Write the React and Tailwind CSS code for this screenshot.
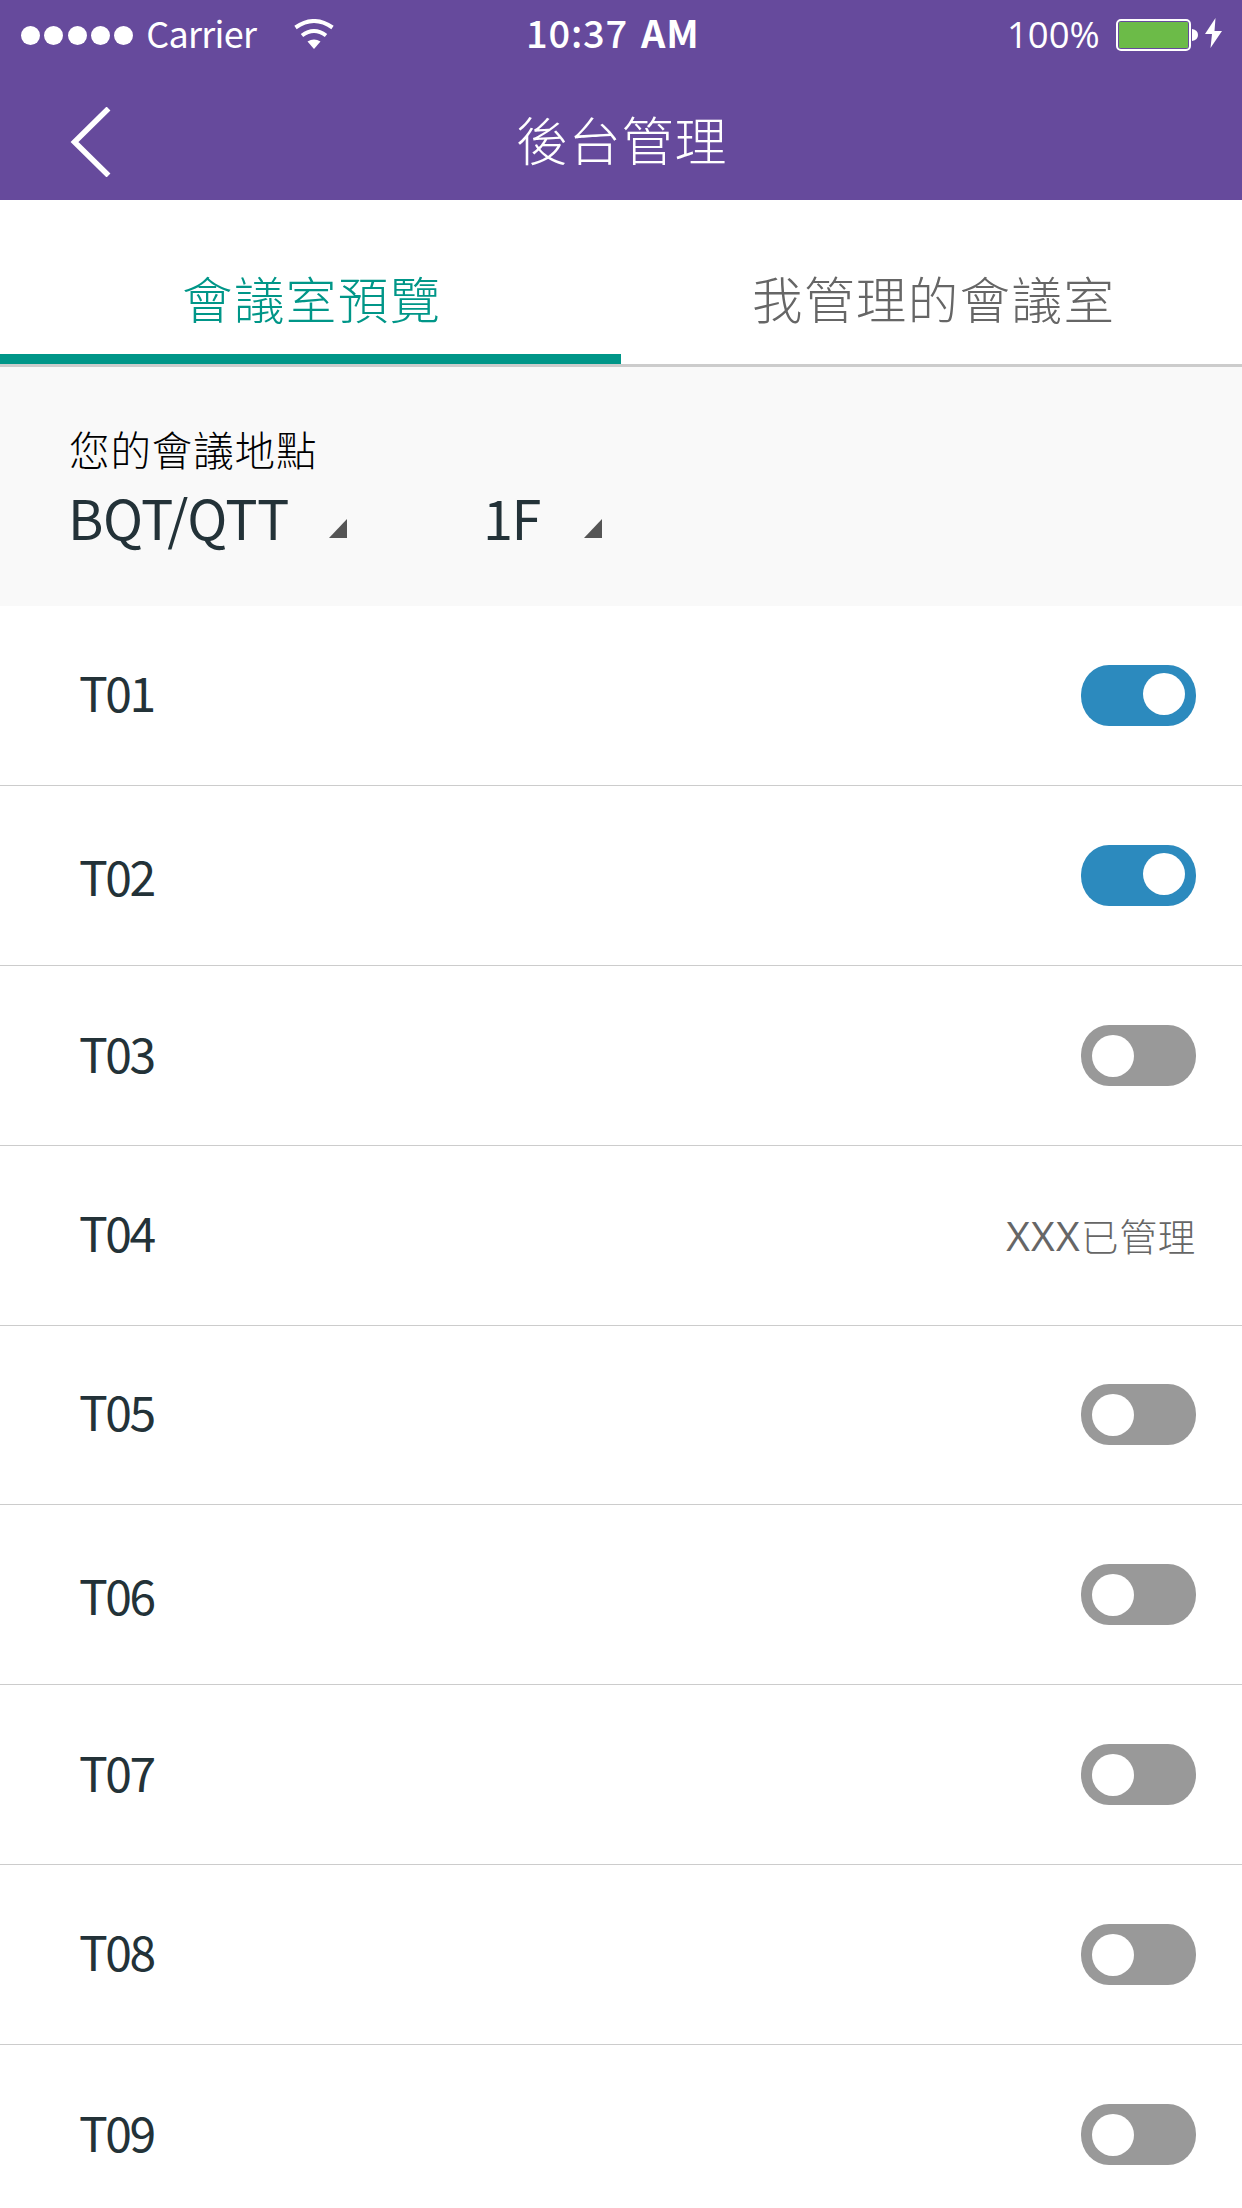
const rooms = [
  { name: "T01", on: true, row: "h-[180px]", label: "pt-[61px]", control: "pt-[59px]" },
  { name: "T02", on: true, row: "h-[180px]", label: "pt-[65px]", control: "pt-[59px]" },
  { name: "T03", on: false, row: "h-[180px]", label: "pt-[62px]", control: "pt-[59px]" },
  { name: "T04", owner: "XXX", row: "h-[180px]", label: "pt-[61px]", control: "pt-[59px]" },
  { name: "T05", on: false, row: "h-[179px]", label: "pt-[60px]", control: "pt-[58px]" },
  { name: "T06", on: false, row: "h-[180px]", label: "pt-[65px]", control: "pt-[59px]" },
  { name: "T07", on: false, row: "h-[180px]", label: "pt-[62px]", control: "pt-[59px]" },
  { name: "T08", on: false, row: "h-[180px]", label: "pt-[61px]", control: "pt-[59px]" },
  { name: "T09", on: false, row: "h-[180px]", label: "pt-[62px]", control: "pt-[59px]" },
];

function StatusBar() {
  return (
    <div className="flex h-[70px] items-center">
      <div className="ml-[21px] flex w-[505px] items-center">
        <div className="flex gap-[4.3px]">
          {[0, 1, 2, 3, 4].map((i) => (
            <span key={i} className="size-[19px] rounded-full bg-white" />
          ))}
        </div>
        <span className="mb-[6px] ml-[13px] w-[148px] text-[36px] leading-[50px] tracking-[-0.7px]">Carrier</span>
        <svg className="mb-[2px] h-[30px] w-[40px]" viewBox="0 0 40 30" fill="none" stroke="#fff" strokeWidth="4">
          <path d="M1.500 8.500Q20 -4.500 38.500 8.500" />
          <path d="M8 16.500Q20 7.500 32 16.500" />
          <path d="M13.500 22.500Q20 18.500 26.500 22.500L20 30Z" fill="#fff" stroke="none" />
        </svg>
      </div>
      <span className="mb-[6px] w-[481px] whitespace-nowrap text-[38px] font-bold leading-[50px] tracking-[0.8px]">
        <span className="font-medium">10:37</span>
        <span className="ml-[13px]">AM</span>
      </span>
      <span className="mb-[2px] w-[107px] font-['Open_Sans',sans-serif] text-[36.5px] leading-[50px]">100%</span>
      <svg className="h-[34px] w-[108px]" viewBox="1114 18 108 34" fill="none">
        <rect x="1117" y="20" width="73" height="30" rx="4" stroke="#fff" strokeWidth="2" />
        <rect x="1119" y="22" width="69" height="26" rx="1" fill="#6cbb48" />
        <path d="M1192 29q6 1 6 6t-6 6z" fill="#fff" />
        <path d="M1215.500 18L1205 34H1212L1210.500 48L1222 31H1214.500Z" fill="#fff" />
      </svg>
    </div>
  );
}

function Header() {
  return (
    <header className="h-[200px] bg-[#664a9c] text-white">
      <StatusBar />
      <div className="grid h-[130px] grid-cols-[516px_1fr]">
        <svg className="ml-[70px] mt-[37px] h-[70px] w-[42px]" viewBox="70 107 42 70" fill="none" stroke="#fff" strokeWidth="5.500">
          <path d="M108.500 108.500L74.500 142L108.500 175.500" />
        </svg>
        <h1 className="mt-[29px] text-[52px] font-light leading-[80px] tracking-[0.8px]">後台管理</h1>
      </div>
    </header>
  );
}

function Tabs() {
  return (
    <nav className="grid h-[167px] grid-cols-2 border-b-[3px] border-[#ccc] bg-white text-[50.500px] font-light leading-[80px] tracking-[1.400px]">
      <div className="border-b-[10px] border-[#009688] pl-[182px] pt-[57px] text-[#009688]">會議室預覽</div>
      <div className="pl-[131px] pt-[57px] text-[#666]">我管理的會議室</div>
    </nav>
  );
}

function Corner() {
  return (
    <svg className="h-[19px] w-[18px]" viewBox="0 0 18 19">
      <path d="M18 0V19H0Z" fill="#555" />
    </svg>
  );
}

function LocationPicker() {
  return (
    <section className="h-[239px] bg-[#f9f9f9] pl-[68px] pt-[51px]">
      <p className="pl-[1px] pt-[1px] text-[40.500px] font-light leading-[59px] tracking-[0.9px] text-black">您的會議地點</p>
      <div className="flex h-[70px] items-start text-[54px] leading-[78px] tracking-[-0.6px] text-[#233238]">
        <span className="w-[261px] whitespace-nowrap">BQT/QTT</span>
        <span className="mt-[41px] flex"><Corner /></span>
        <span className="ml-[136px] w-[101px] whitespace-nowrap tracking-[-1.500px]">1F</span>
        <span className="mt-[41px] flex"><Corner /></span>
      </div>
    </section>
  );
}

function Toggle({ on }) {
  return on ? (
    <span className="flex h-[61px] w-[115px] justify-end rounded-[28px/30px] bg-[#2c8abe] pr-[11px] pt-[8px]">
      <span className="size-[42px] rounded-full bg-white" />
    </span>
  ) : (
    <span className="flex h-[61px] w-[115px] rounded-[28px/30px] bg-[#999] pl-[11px] pt-[10px]">
      <span className="size-[42px] rounded-full bg-white" />
    </span>
  );
}

function RoomRow({ room }) {
  return (
    <li className={`flex justify-between border-b border-[#ccc] pl-[79px] pr-[46px] ${room.row}`}>
      <div className={room.label}>
        <div className="text-[48px] leading-[48px] tracking-[-2.500px] text-[#233238]">{room.name}</div>
      </div>
      <div className={room.control}>
        {room.owner ? (
          <div className="flex items-baseline leading-[60px] text-[#666]">
            <span className="font-['Open_Sans',sans-serif] text-[41px] tracking-[1.300px]">{room.owner}</span>
            <span className="text-[37.500px] font-light tracking-[0.800px]">已管理</span>
          </div>
        ) : (
          <Toggle on={room.on} />
        )}
      </div>
    </li>
  );
}

export default function App() {
  return (
    <div className="h-[2208px] w-[1242px] overflow-hidden bg-white font-['Noto_Sans_CJK_TC',sans-serif]">
      <Header />
      <Tabs />
      <LocationPicker />
      <ul>
        {rooms.map((room) => (
          <RoomRow key={room.name} room={room} />
        ))}
      </ul>
    </div>
  );
}
